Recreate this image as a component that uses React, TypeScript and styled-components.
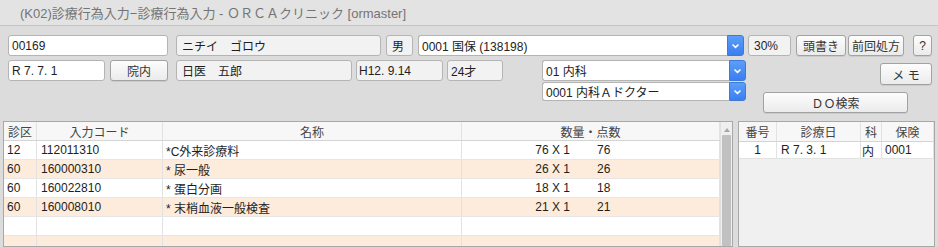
import React from 'react';
import styled, { createGlobalStyle } from 'styled-components';

const Global = createGlobalStyle`
  html, body { margin: 0; padding: 0; background: #dcdcdc; }
  body {
    font-family: "Liberation Sans", "Noto Sans CJK JP", sans-serif;
    font-size: 12px;
    color: #222;
  }
  * { box-sizing: border-box; }
`;

const Window = styled.div`
  width: 938px;
  height: 247px;
  overflow: hidden;
  background: #dcdcdc;
  display: flex;
  flex-direction: column;
`;

const TitleBar = styled.div`
  height: 26px;
  flex: none;
  background: #e3e3e3;
  border-bottom: 1px solid #c4c4c4;
  padding-left: 20px;
  display: flex;
  align-items: center;
  color: #747474;
  font-size: 13px;
`;

const Form = styled.div`
  padding: 9px 6px 0 8px;
  display: flex;
  flex-direction: column;
  gap: 4px;
`;

const Row = styled.div`
  display: flex;
  align-items: flex-start;
`;

const Field = styled.div<{ $w: number; $ml?: number; $ro?: boolean; $pl?: number; $h?: number }>`
  width: ${p => p.$w}px;
  height: ${p => p.$h ?? 21}px;
  margin-left: ${p => p.$ml ?? 0}px;
  padding-left: ${p => p.$pl ?? 3}px;
  flex: none;
  display: flex;
  align-items: center;
  background: ${p => (p.$ro ? '#f2f2f2' : '#ffffff')};
  border: 1px solid #b4b4b4;
  border-radius: 3px;
  white-space: pre;
  color: #1e1e1e;
`;

const Button = styled.div<{ $w: number; $ml?: number; $h?: number }>`
  width: ${p => p.$w}px;
  height: ${p => p.$h ?? 21}px;
  margin-left: ${p => p.$ml ?? 0}px;
  flex: none;
  display: flex;
  align-items: center;
  justify-content: center;
  background: linear-gradient(#fdfdfd, #ebebeb);
  border: 1px solid #a2a2a2;
  border-radius: 3px;
  box-shadow: 0 1px 0 rgba(0, 0, 0, 0.08);
  color: #333;
  white-space: pre;
`;

const Select = styled.div<{ $w: number; $ml?: number; $h?: number }>`
  width: ${p => p.$w}px;
  height: ${p => p.$h ?? 21}px;
  margin-left: ${p => p.$ml ?? 0}px;
  flex: none;
  display: flex;
`;

const SelectBox = styled.div`
  flex: 1;
  display: flex;
  align-items: center;
  padding-left: 3px;
  background: #fff;
  border: 1px solid #b4b4b4;
  border-right: none;
  border-radius: 3px 0 0 3px;
  white-space: pre;
`;

const SelectArrow = styled.div`
  width: 17px;
  flex: none;
  display: flex;
  align-items: center;
  justify-content: center;
  background: linear-gradient(#5c9ef9, #3a7ef0);
  border: 1px solid #3f79d8;
  border-radius: 0 3px 3px 0;
`;

const Chevron = () => (
  <svg width="9" height="6" viewBox="0 0 9 6">
    <polyline points="1.5,1.5 4.5,4.3 7.5,1.5" fill="none" stroke="#fff" strokeWidth="1.6" />
  </svg>
);

const Drop = ({ w, ml, h, children }: { w: number; ml?: number; h?: number; children: React.ReactNode }) => (
  <Select $w={w} $ml={ml} $h={h}>
    <SelectBox>{children}</SelectBox>
    <SelectArrow>
      <Chevron />
    </SelectArrow>
  </Select>
);

const Stack = styled.div<{ $ml: number; $w: number }>`
  margin-left: ${p => p.$ml}px;
  width: ${p => p.$w}px;
  flex: none;
  display: flex;
  flex-direction: column;
  gap: 1px;
`;

const RightCol = styled.div`
  margin-left: 17px;
  width: 169px;
  flex: none;
  display: flex;
  flex-direction: column;
  padding-top: 3px;
`;

const MemoWrap = styled.div`
  display: flex;
  justify-content: flex-end;
  margin-bottom: 7px;
`;

const TableArea = styled.div`
  margin-top: 8px;
  padding-left: 3px;
  display: flex;
  gap: 5px;
  flex: 1;
  min-height: 0;
`;

const Grid = styled.div`
  width: 730px;
  flex: none;
  border: 1px solid #a8a8a8;
  background: #fff;
  display: flex;
  overflow: hidden;
`;

const Rows = styled.div`
  width: 716px;
  flex: none;
  display: flex;
  flex-direction: column;
`;

const GRow = styled.div<{ $alt?: boolean; $head?: boolean }>`
  height: 19px;
  flex: none;
  display: grid;
  grid-template-columns: 33px 126px 299px 258px;
  background: ${p => (p.$head ? '#f7f7f7' : p.$alt ? '#fdecdc' : '#ffffff')};
  border-bottom: 1px solid ${p => (p.$head ? '#d4d4d4' : '#e6e6e6')};
  color: ${p => (p.$head ? '#444' : '#1e1e1e')};
`;

const Cell = styled.div<{ $center?: boolean; $pl?: number }>`
  display: flex;
  align-items: center;
  justify-content: ${p => (p.$center ? 'center' : 'flex-start')};
  padding-left: ${p => (p.$center ? 0 : p.$pl ?? 3)}px;
  border-right: 1px solid #e2e2e2;
  white-space: pre;
  overflow: hidden;
`;

const Qty = styled.span`
  width: 108px;
  text-align: right;
  flex: none;
`;

const Score = styled.span`
  margin-left: 27px;
`;

const Scrollbar = styled.div`
  width: 12px;
  flex: none;
  background: #efefef;
  border-left: 1px solid #e0e0e0;
  display: flex;
  flex-direction: column;
  align-items: center;
`;

const ArrowUp = styled.div`
  margin-top: 6px;
  width: 0;
  height: 0;
  border-left: 3px solid transparent;
  border-right: 3px solid transparent;
  border-bottom: 4px solid #a8a8a8;
`;

const Thumb = styled.div`
  margin-top: 3px;
  width: 9px;
  flex: 1;
  background: #c1c1c1;
  border-radius: 1px;
`;

const Panel = styled.div`
  width: 197px;
  flex: none;
  border: 1px solid #a8a8a8;
  background: #f0f0f0;
  display: flex;
  flex-direction: column;
`;

const PRow = styled.div<{ $head?: boolean }>`
  height: ${p => (p.$head ? 20 : 17)}px;
  display: grid;
  grid-template-columns: 38px 84px 21px 52px;
  background: ${p => (p.$head ? '#f7f7f7' : '#ffffff')};
  border-bottom: 1px solid ${p => (p.$head ? '#d4d4d4' : '#e2e2e2')};
  color: ${p => (p.$head ? '#444' : '#1e1e1e')};
`;

const rows = [
  { k: '12', code: '112011310', name: '*C外来診療料', q: '76 X 1', s: '76' },
  { k: '60', code: '160000310', name: '* 尿一般', q: '26 X 1', s: '26' },
  { k: '60', code: '160022810', name: '* 蛋白分画', q: '18 X 1', s: '18' },
  { k: '60', code: '160008010', name: '* 末梢血液一般検査', q: '21 X 1', s: '21' },
  { k: '', code: '', name: '', q: '', s: '' },
  { k: '', code: '', name: '', q: '', s: '' },
];

export default function App() {
  return (
    <Window>
      <Global />
      <TitleBar>(K02)診療行為入力−診療行為入力 - ＯＲＣＡクリニック [ormaster]</TitleBar>
      <Form>
        <Row>
          <Field $w={160}>00169</Field>
          <Field $w={205} $ml={8} $ro $pl={5}>ニチイ　ゴロウ</Field>
          <Field $w={27} $ml={5} $ro $pl={5}>男</Field>
          <Drop w={326} ml={5}>0001 国保 (138198)</Drop>
          <Field $w={43} $ml={4} $ro $pl={5}>30%</Field>
          <Button $w={50} $ml={5}>頭書き</Button>
          <Button $w={56} $ml={2}>前回処方</Button>
          <Button $w={19} $ml={9}>?</Button>
        </Row>
        <Row>
          <Field $w={97}>R 7. 7. 1</Field>
          <Button $w={58} $ml={5}>院内</Button>
          <Field $w={176} $ml={8} $ro $pl={5}>日医　五郎</Field>
          <Field $w={87} $ml={4} $ro $pl={2}>H12. 9.14</Field>
          <Field $w={56} $ml={4} $ro>24才</Field>
          <Stack $ml={39} $w={204}>
            <Drop w={204}>01 内科</Drop>
            <Drop w={204} h={19}>0001 内科Ａドクター</Drop>
          </Stack>
          <RightCol>
            <MemoWrap>
              <Button $w={52} $h={22}>メ モ</Button>
            </MemoWrap>
            <Button $w={145}>ＤＯ検索</Button>
          </RightCol>
        </Row>
      </Form>
      <TableArea>
        <Grid>
          <Rows>
            <GRow $head>
              <Cell $center>診区</Cell>
              <Cell $center>入力コード</Cell>
              <Cell $center>名称</Cell>
              <Cell $center>数量・点数</Cell>
            </GRow>
            {rows.map((r, i) => (
              <GRow key={i} $alt={i % 2 === 1}>
                <Cell>{r.k}</Cell>
                <Cell $pl={4}>{r.code}</Cell>
                <Cell $pl={3}>{r.name}</Cell>
                <Cell $pl={0}>
                  <Qty>{r.q}</Qty>
                  <Score>{r.s}</Score>
                </Cell>
              </GRow>
            ))}
          </Rows>
          <Scrollbar>
            <ArrowUp />
            <Thumb />
          </Scrollbar>
        </Grid>
        <Panel>
          <PRow $head>
            <Cell $center>番号</Cell>
            <Cell $center>診療日</Cell>
            <Cell $center>科</Cell>
            <Cell $center>保険</Cell>
          </PRow>
          <PRow>
            <Cell $center>1</Cell>
            <Cell $pl={4}>R 7. 3. 1</Cell>
            <Cell $pl={1}>内</Cell>
            <Cell $pl={3}>0001</Cell>
          </PRow>
        </Panel>
      </TableArea>
    </Window>
  );
}
